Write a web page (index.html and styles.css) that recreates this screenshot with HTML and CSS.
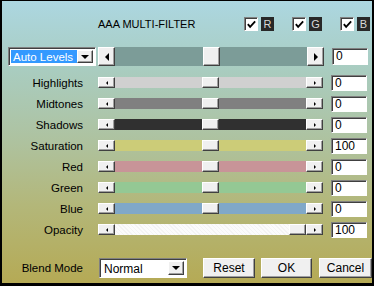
FILE: index.html
```html
<!DOCTYPE html>
<html>
<head>
    <meta charset="UTF-8">
    <title>AAA Multi-Filter</title>
    <link rel="stylesheet" href="styles.css">
</head>
<body>
    <div class="frame">
        <div class="header">
            <div class="title">AAA MULTI-FILTER</div>
            <div class="channels">
                <div class="channel">
                    <span class="check"><svg width="12" height="12" viewBox="0 0 12 12"><path d="M2 5 L4.5 8 L10 2" fill="none" stroke="#000" stroke-width="2"/></svg></span>
                    <span class="tag">R</span>
                </div>
                <div class="channel">
                    <span class="check"><svg width="12" height="12" viewBox="0 0 12 12"><path d="M2 5 L4.5 8 L10 2" fill="none" stroke="#000" stroke-width="2"/></svg></span>
                    <span class="tag">G</span>
                </div>
                <div class="channel">
                    <span class="check"><svg width="12" height="12" viewBox="0 0 12 12"><path d="M2 5 L4.5 8 L10 2" fill="none" stroke="#000" stroke-width="2"/></svg></span>
                    <span class="tag">B</span>
                </div>
            </div>
        </div>

        <div class="row-main">
            <div class="select select-levels">
                <span class="select-text selected">Auto Levels</span>
                <span class="select-btn"><span class="tri-down"></span></span>
            </div>
            <div class="slider slider-big">
                <span class="arrow"><span class="tri-left"></span></span>
                <div class="track track-levels"><span class="thumb" style="left: 88px;"></span></div>
                <span class="arrow"><span class="tri-right"></span></span>
            </div>
            <div class="field field-big">0</div>
        </div>

        <div class="rows">
            <div class="row">
                <div class="label">Highlights</div>
                <div class="slider">
                    <span class="arrow"><span class="tri-left"></span></span>
                    <div class="track track-highlights"><span class="thumb" style="left: 87px;"></span></div>
                    <span class="arrow"><span class="tri-right"></span></span>
                </div>
                <div class="field">0</div>
            </div>
            <div class="row">
                <div class="label">Midtones</div>
                <div class="slider">
                    <span class="arrow"><span class="tri-left"></span></span>
                    <div class="track track-midtones"><span class="thumb" style="left: 87px;"></span></div>
                    <span class="arrow"><span class="tri-right"></span></span>
                </div>
                <div class="field">0</div>
            </div>
            <div class="row">
                <div class="label">Shadows</div>
                <div class="slider">
                    <span class="arrow"><span class="tri-left"></span></span>
                    <div class="track track-shadows"><span class="thumb" style="left: 87px;"></span></div>
                    <span class="arrow"><span class="tri-right"></span></span>
                </div>
                <div class="field">0</div>
            </div>
            <div class="row">
                <div class="label">Saturation</div>
                <div class="slider">
                    <span class="arrow"><span class="tri-left"></span></span>
                    <div class="track track-saturation"><span class="thumb" style="left: 87px;"></span></div>
                    <span class="arrow"><span class="tri-right"></span></span>
                </div>
                <div class="field">100</div>
            </div>
            <div class="row">
                <div class="label">Red</div>
                <div class="slider">
                    <span class="arrow"><span class="tri-left"></span></span>
                    <div class="track track-red"><span class="thumb" style="left: 87px;"></span></div>
                    <span class="arrow"><span class="tri-right"></span></span>
                </div>
                <div class="field">0</div>
            </div>
            <div class="row">
                <div class="label">Green</div>
                <div class="slider">
                    <span class="arrow"><span class="tri-left"></span></span>
                    <div class="track track-green"><span class="thumb" style="left: 87px;"></span></div>
                    <span class="arrow"><span class="tri-right"></span></span>
                </div>
                <div class="field">0</div>
            </div>
            <div class="row">
                <div class="label">Blue</div>
                <div class="slider">
                    <span class="arrow"><span class="tri-left"></span></span>
                    <div class="track track-blue"><span class="thumb" style="left: 87px;"></span></div>
                    <span class="arrow"><span class="tri-right"></span></span>
                </div>
                <div class="field">0</div>
            </div>
            <div class="row">
                <div class="label">Opacity</div>
                <div class="slider">
                    <span class="arrow"><span class="tri-left"></span></span>
                    <div class="track track-opacity"><span class="thumb" style="left: 174px;"></span></div>
                    <span class="arrow"><span class="tri-right"></span></span>
                </div>
                <div class="field">100</div>
            </div>
        </div>

        <div class="footer">
            <div class="label">Blend Mode</div>
            <div class="select select-blend">
                <span class="select-text">Normal</span>
                <span class="select-btn"><span class="tri-down"></span></span>
            </div>
            <div class="buttons">
                <button class="btn btn-reset">Reset</button>
                <button class="btn btn-ok">OK</button>
                <button class="btn btn-cancel">Cancel</button>
            </div>
        </div>
    </div>
</body>
</html>
```

FILE: styles.css
```css
body {
    margin: 0;
    background: #000;
}

.frame {
    width: 374px;
    height: 286px;
    box-sizing: border-box;
    border: 2px solid #000;
    border-top-width: 1px;
    border-bottom-width: 3px;
    background: linear-gradient(to bottom, #acd7e1 0%, #a9ccbf 25%, #aec29f 50%, #b3b77a 72%, #b5aa55 100%);
    font-family: "Liberation Sans", Arial, sans-serif;
    font-size: 11px;
    color: #000;
}

/* raised 3d look */
.arrow, .thumb, .select-btn, .btn {
    box-sizing: border-box;
    background: #f0f0f0;
    border: 1px solid;
    border-color: #fff #404040 #404040 #fff;
    box-shadow: inset -1px -1px #a0a0a0;
}

/* sunken 3d look */
.field, .check, .select {
    box-sizing: border-box;
    background: #fff;
    border: 1px solid;
    border-color: #808080 #fff #fff #808080;
    box-shadow: inset 1px 1px #404040;
}

.header {
    display: flex;
    align-items: center;
    height: 14px;
    padding: 16px 0 16px 96px;
}

.title {
    width: 146px;
    font-size: 11px;
}

.channels {
    display: flex;
    gap: 18px;
}

.channel {
    display: flex;
    gap: 3px;
}

.check {
    width: 14px;
    height: 14px;
    display: flex;
    align-items: center;
    justify-content: center;
}

.check svg {
    display: block;
    margin: 1px 0 0 1px;
}

.tag {
    width: 13px;
    height: 14px;
    background: #282828;
    color: #d8d8d8;
    line-height: 14px;
    text-align: center;
    font-size: 11px;
}

.row-main {
    display: flex;
    align-items: flex-start;
    height: 19px;
    padding-left: 6px;
}

.select {
    display: flex;
    align-items: stretch;
    padding: 2px;
}

.select-levels {
    width: 88px;
    height: 19px;
    margin-right: 2px;
}

.select-text {
    flex: 1;
    line-height: 15px;
    padding-left: 2px;
    white-space: nowrap;
    overflow: hidden;
    font-size: 11.5px;
}

.select-text.selected {
    background: #3399ff;
    color: #fff;
}

.select-btn {
    width: 16px;
    display: flex;
    align-items: center;
    justify-content: center;
}

.tri-down {
    width: 0;
    height: 0;
    border-left: 4px solid transparent;
    border-right: 4px solid transparent;
    border-top: 4px solid #000;
}

.tri-left, .tri-right {
    width: 0;
    height: 0;
    border-top: 2px solid transparent;
    border-bottom: 2px solid transparent;
}

.tri-left {
    border-right: 2px solid #000;
}

.tri-right {
    border-left: 2px solid #000;
}

.slider {
    display: flex;
    height: 11px;
}

.slider .arrow {
    width: 17px;
    display: flex;
    align-items: center;
    justify-content: center;
}

.track {
    position: relative;
    width: 191px;
}

.thumb {
    position: absolute;
    top: 0;
    width: 17px;
    height: 100%;
}

.slider-big {
    height: 19px;
}

.slider-big .tri-left, .slider-big .tri-right {
    border-top-width: 4px;
    border-bottom-width: 4px;
}

.slider-big .tri-left {
    border-right-width: 4px;
}

.slider-big .tri-right {
    border-left-width: 4px;
}

.slider-big .track {
    width: 192px;
}

.track-levels { background: #7c9c98; }
.track-highlights { background: #d0d0d0; }
.track-midtones { background: #808080; }
.track-shadows { background: #303030; }
.track-saturation { background: #cccc78; }
.track-red { background: #c89498; }
.track-green { background: #94c894; }
.track-blue { background: #80a8c8; }
.track-opacity {
    background: #fbfbfb;
    background-image: repeating-linear-gradient(45deg, #f3f3f3 0 1px, transparent 1px 3px);
}

.field {
    width: 36px;
    height: 16px;
    margin-left: 8px;
    padding-left: 3px;
    line-height: 14px;
    font-size: 12px;
}

.field-big {
    height: 17px;
    margin-top: 1px;
    line-height: 15px;
}

.rows {
    margin-top: 6px;
}

.row {
    display: flex;
    align-items: center;
    height: 21px;
}

.label {
    width: 96px;
    box-sizing: border-box;
    padding-right: 15px;
    text-align: right;
    font-size: 11.5px;
}

.footer {
    display: flex;
    align-items: center;
    height: 20px;
    margin-top: 18px;
}

.select-blend {
    width: 88px;
    height: 20px;
    margin-left: 1px;
}

.select-blend .select-text {
    font-size: 12px;
    line-height: 16px;
}

.buttons {
    display: flex;
    gap: 6px;
    margin-left: 16px;
}

.btn {
    height: 20px;
    padding: 0;
    font-family: "Liberation Sans", Arial, sans-serif;
    font-size: 12px;
    color: #000;
}

.btn-reset { width: 52px; }
.btn-ok { width: 51px; }
.btn-cancel { width: 53px; margin-left: 1px; }
```
